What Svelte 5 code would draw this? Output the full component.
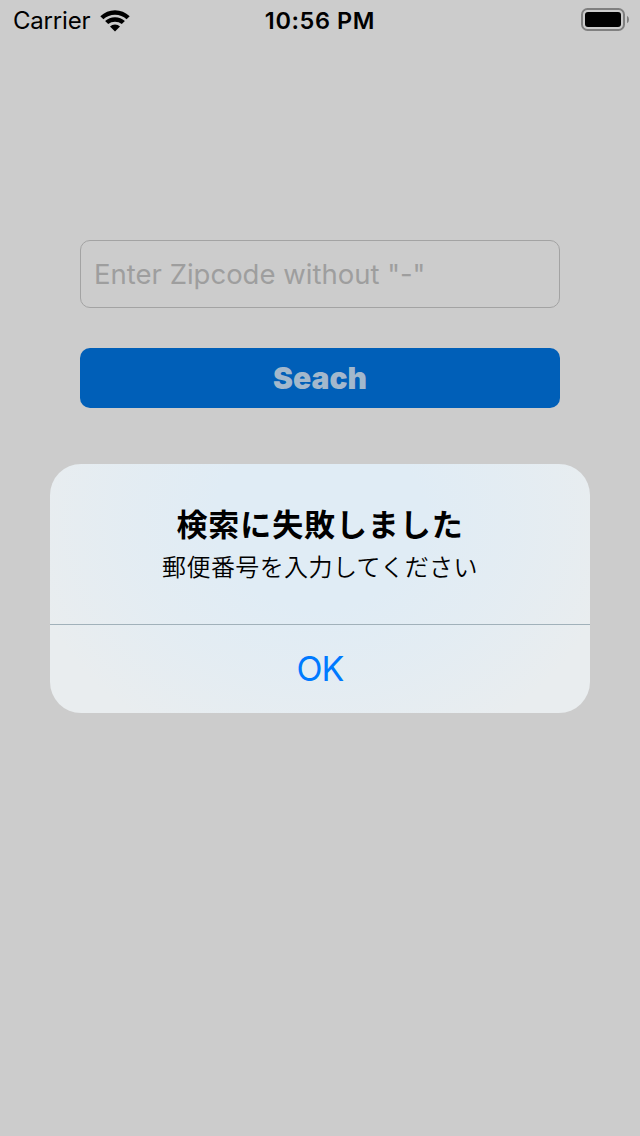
<script>
  let zipcode = '';

  const alert = {
    title: '検索に失敗しました',
    message: '郵便番号を入力してください',
    action: 'OK',
  };
</script>

<div class="screen">
  <header class="status-bar">
    <div class="network">
      <span class="carrier">Carrier</span>
      <svg class="wifi" width="30" height="22" viewBox="0 0 30 22">
        <path d="M0.3 6.3Q6.6 0.2 15 0.2T29.7 6.3L26.6 9.3Q21.7 4.8 15 4.8T3.4 9.3Z" />
        <path d="M5.1 11.1Q9.2 7.3 15 7.3T24.9 11.1L21.8 14.1Q18.9 11.7 15 11.7T8.2 14.1Z" />
        <path d="M15 21.6L10 16.4Q12 14.4 15 14.4T20 16.4Z" />
      </svg>
    </div>
    <time>10:56 PM</time>
    <div class="power">
      <svg width="48" height="24" viewBox="0 0 48 24">
        <rect x="1" y="1" width="42" height="21" rx="5.5" fill="none" stroke="#808080" stroke-width="2" />
        <rect x="4" y="4" width="36" height="15" rx="3" />
        <path d="M46 7.8Q48 8.8 48 11.5T46 15.2Z" fill="#808080" />
      </svg>
    </div>
  </header>

  <main class="form">
    <input class="zip" type="text" placeholder={'Enter Zipcode without "-"'} bind:value={zipcode} />
    <button class="search">Seach</button>
  </main>

  <div class="alert" role="alertdialog">
    <div class="alert-body">
      <h2>{alert.title}</h2>
      <p>{alert.message}</p>
    </div>
    <button class="alert-action">{alert.action}</button>
  </div>
</div>

<style>
  :global(body) {
    margin: 0;
    background: #ccc;
  }

  .screen {
    box-sizing: border-box;
    width: 640px;
    height: 1136px;
    background: #ccc;
    color: #000;
    font-family: Inter, "Noto Sans CJK JP", sans-serif;
    overflow: hidden;
  }

  .status-bar {
    display: grid;
    grid-template-columns: 1fr auto 1fr;
    align-items: center;
    height: 40px;
    padding: 0 11px 0 13px;
    box-sizing: border-box;
    font-size: 24px;
    line-height: 40px;
  }

  .network {
    display: flex;
    align-items: center;
    gap: 10px;
  }

  .carrier {
    padding-top: 2px;
    line-height: 38px;
    letter-spacing: -0.2px;
  }

  .status-bar time {
    padding-top: 2px;
    line-height: 38px;
    font-size: 23.5px;
    font-weight: 600;
    letter-spacing: 0.6px;
    margin-right: 2px;
  }

  .power {
    display: flex;
    justify-content: flex-end;
  }

  svg {
    display: block;
  }

  .wifi {
    margin-top: 1px;
  }

  .form {
    display: flex;
    flex-direction: column;
    gap: 40px;
    padding: 200px 80px 0;
  }

  .zip {
    box-sizing: border-box;
    height: 68px;
    padding: 0 13px;
    border: 1px solid #a3a3a3;
    border-radius: 10px;
    background: transparent;
    font: 400 27.5px Inter, sans-serif;
    outline: none;
  }
  .zip::placeholder {
    color: #9e9e9e;
    opacity: 1;
  }

  .search {
    height: 60px;
    padding: 0;
    border: 0;
    border-radius: 10px;
    background: #005fb8;
    color: #a3b8cc;
    font: 900 30px Inter, sans-serif;
  }

  .alert {
    width: 540px;
    height: 249px;
    margin: 56px auto 0;
    display: flex;
    flex-direction: column;
    border-radius: 31px;
    overflow: hidden;
    background:
      radial-gradient(ellipse 300px 250px at 50% 22%, #e0ecf5 35%, rgba(224, 236, 245, 0.6) 65%, rgba(224, 236, 245, 0) 100%),
      #e9edef;
  }

  .alert-body {
    box-sizing: border-box;
    height: 161px;
    padding-top: 37px;
    border-bottom: 1px solid #a1b1ba;
    text-align: center;
  }

  .alert-body h2 {
    margin: 0;
    font: 700 31px/44px "Noto Sans CJK JP", sans-serif;
    letter-spacing: 0.9px;
  }

  .alert-body p {
    margin: 3px 0 0;
    font: 350 24px/36px "Noto Sans CJK JP", sans-serif;
    letter-spacing: 0.4px;
  }

  .alert-action {
    flex: 1;
    padding: 0 0 1px;
    border: 0;
    background: transparent;
    color: #007aff;
    font: 400 34px Inter, sans-serif;
    letter-spacing: -1px;
  }
</style>
